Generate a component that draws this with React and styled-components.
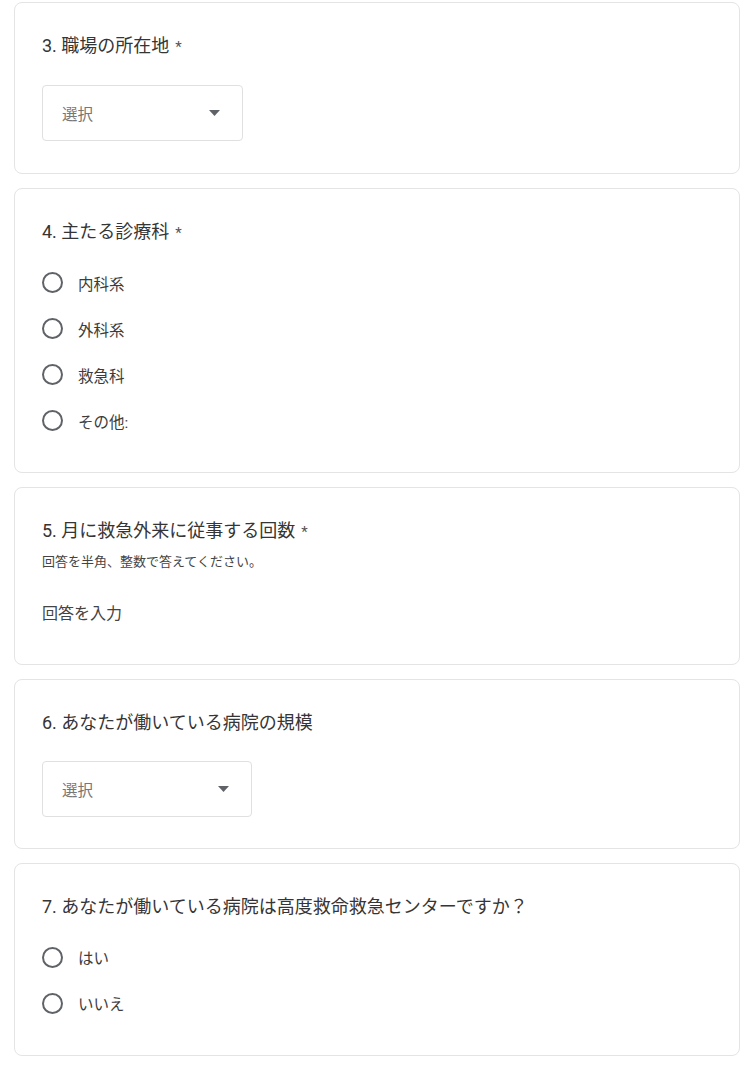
import styled, { createGlobalStyle } from "styled-components";

const GlobalStyle = createGlobalStyle`
  html, body {
    margin: 0;
    padding: 0;
    background: #fff;
  }
  body {
    font-family: Roboto, "Noto Sans CJK JP", "Noto Sans", sans-serif;
    color: #333;
  }
`;

const questions = [
  { id: 3, type: "select", title: "3. 職場の所在地", required: true, width: 201 },
  {
    id: 4,
    type: "radio",
    title: "4. 主たる診療科",
    required: true,
    options: ["内科系", "外科系", "救急科", "その他:"],
  },
  {
    id: 5,
    type: "text",
    title: "5. 月に救急外来に従事する回数",
    required: true,
    description: "回答を半角、整数で答えてください。",
  },
  { id: 6, type: "select", title: "6. あなたが働いている病院の規模", width: 210 },
  {
    id: 7,
    type: "radio",
    title: "7. あなたが働いている病院は高度救命救急センターですか？",
    options: ["はい", "いいえ"],
  },
];

const ArrowDown = () => (
  <svg width="11" height="6" viewBox="0 0 11 6">
    <path d="M0 0 L11 0 L5.5 6 Z" fill="#5f6368" />
  </svg>
);

export default function App() {
  return (
    <>
      <GlobalStyle />
      <Page>
        {questions.map((q) => (
          <Card key={q.id}>
            <Title>
              {q.title}
              {q.required && <Star>*</Star>}
            </Title>
            {q.description && <Description>{q.description}</Description>}

            {q.type === "select" && (
              <Select $width={q.width}>
                <Placeholder>選択</Placeholder>
                <ArrowDown />
              </Select>
            )}

            {q.type === "radio" && (
              <Options>
                {q.options.map((o) => (
                  <Option key={o}>
                    <Circle />
                    <Label>{o}</Label>
                  </Option>
                ))}
              </Options>
            )}

            {q.type === "text" && <Answer>回答を入力</Answer>}
          </Card>
        ))}
      </Page>
    </>
  );
}

const Page = styled.div`
  width: 726px;
  margin-left: 14px;
  padding-top: 2px;
  display: flex;
  flex-direction: column;
  gap: 14px;
`;

const Card = styled.div`
  border: 1px solid #e4e4e4;
  border-radius: 8px;
  padding: 29px 27px 31.5px 27px;
  background: #fff;
`;

const Title = styled.div`
  font-size: 18px;
  line-height: 28px;
  color: #353535;
`;

const Star = styled.span`
  margin-left: 6px;
  color: #555;
  font-size: 15px;
`;

const Description = styled.div`
  margin-top: 7px;
  font-size: 13px;
  line-height: 18px;
  color: #444;
`;

const Select = styled.div`
  margin-top: 24px;
  width: ${(p) => p.$width}px;
  height: 56px;
  box-sizing: border-box;
  border: 1px solid #e0e0e0;
  border-radius: 4px;
  padding: 0 22px 0 19px;
  display: flex;
  align-items: center;
  justify-content: space-between;
`;

const Placeholder = styled.span`
  font-size: 15.5px;
  color: #777;
`;

const Options = styled.div`
  margin-top: 13px;
  margin-bottom: -3px;
  display: flex;
  flex-direction: column;
`;

const Option = styled.div`
  height: 46px;
  display: flex;
  align-items: center;
  gap: 15px;
`;

const Circle = styled.span`
  width: 21px;
  height: 21px;
  box-sizing: border-box;
  border: 2px solid #5f6368;
  border-radius: 50%;
  flex: none;
`;

const Label = styled.span`
  font-size: 15.5px;
  color: #3c3c3c;
`;

const Answer = styled.div`
  margin-top: 21px;
  height: 40px;
  display: flex;
  align-items: center;
  font-size: 16px;
  color: #444;
`;
